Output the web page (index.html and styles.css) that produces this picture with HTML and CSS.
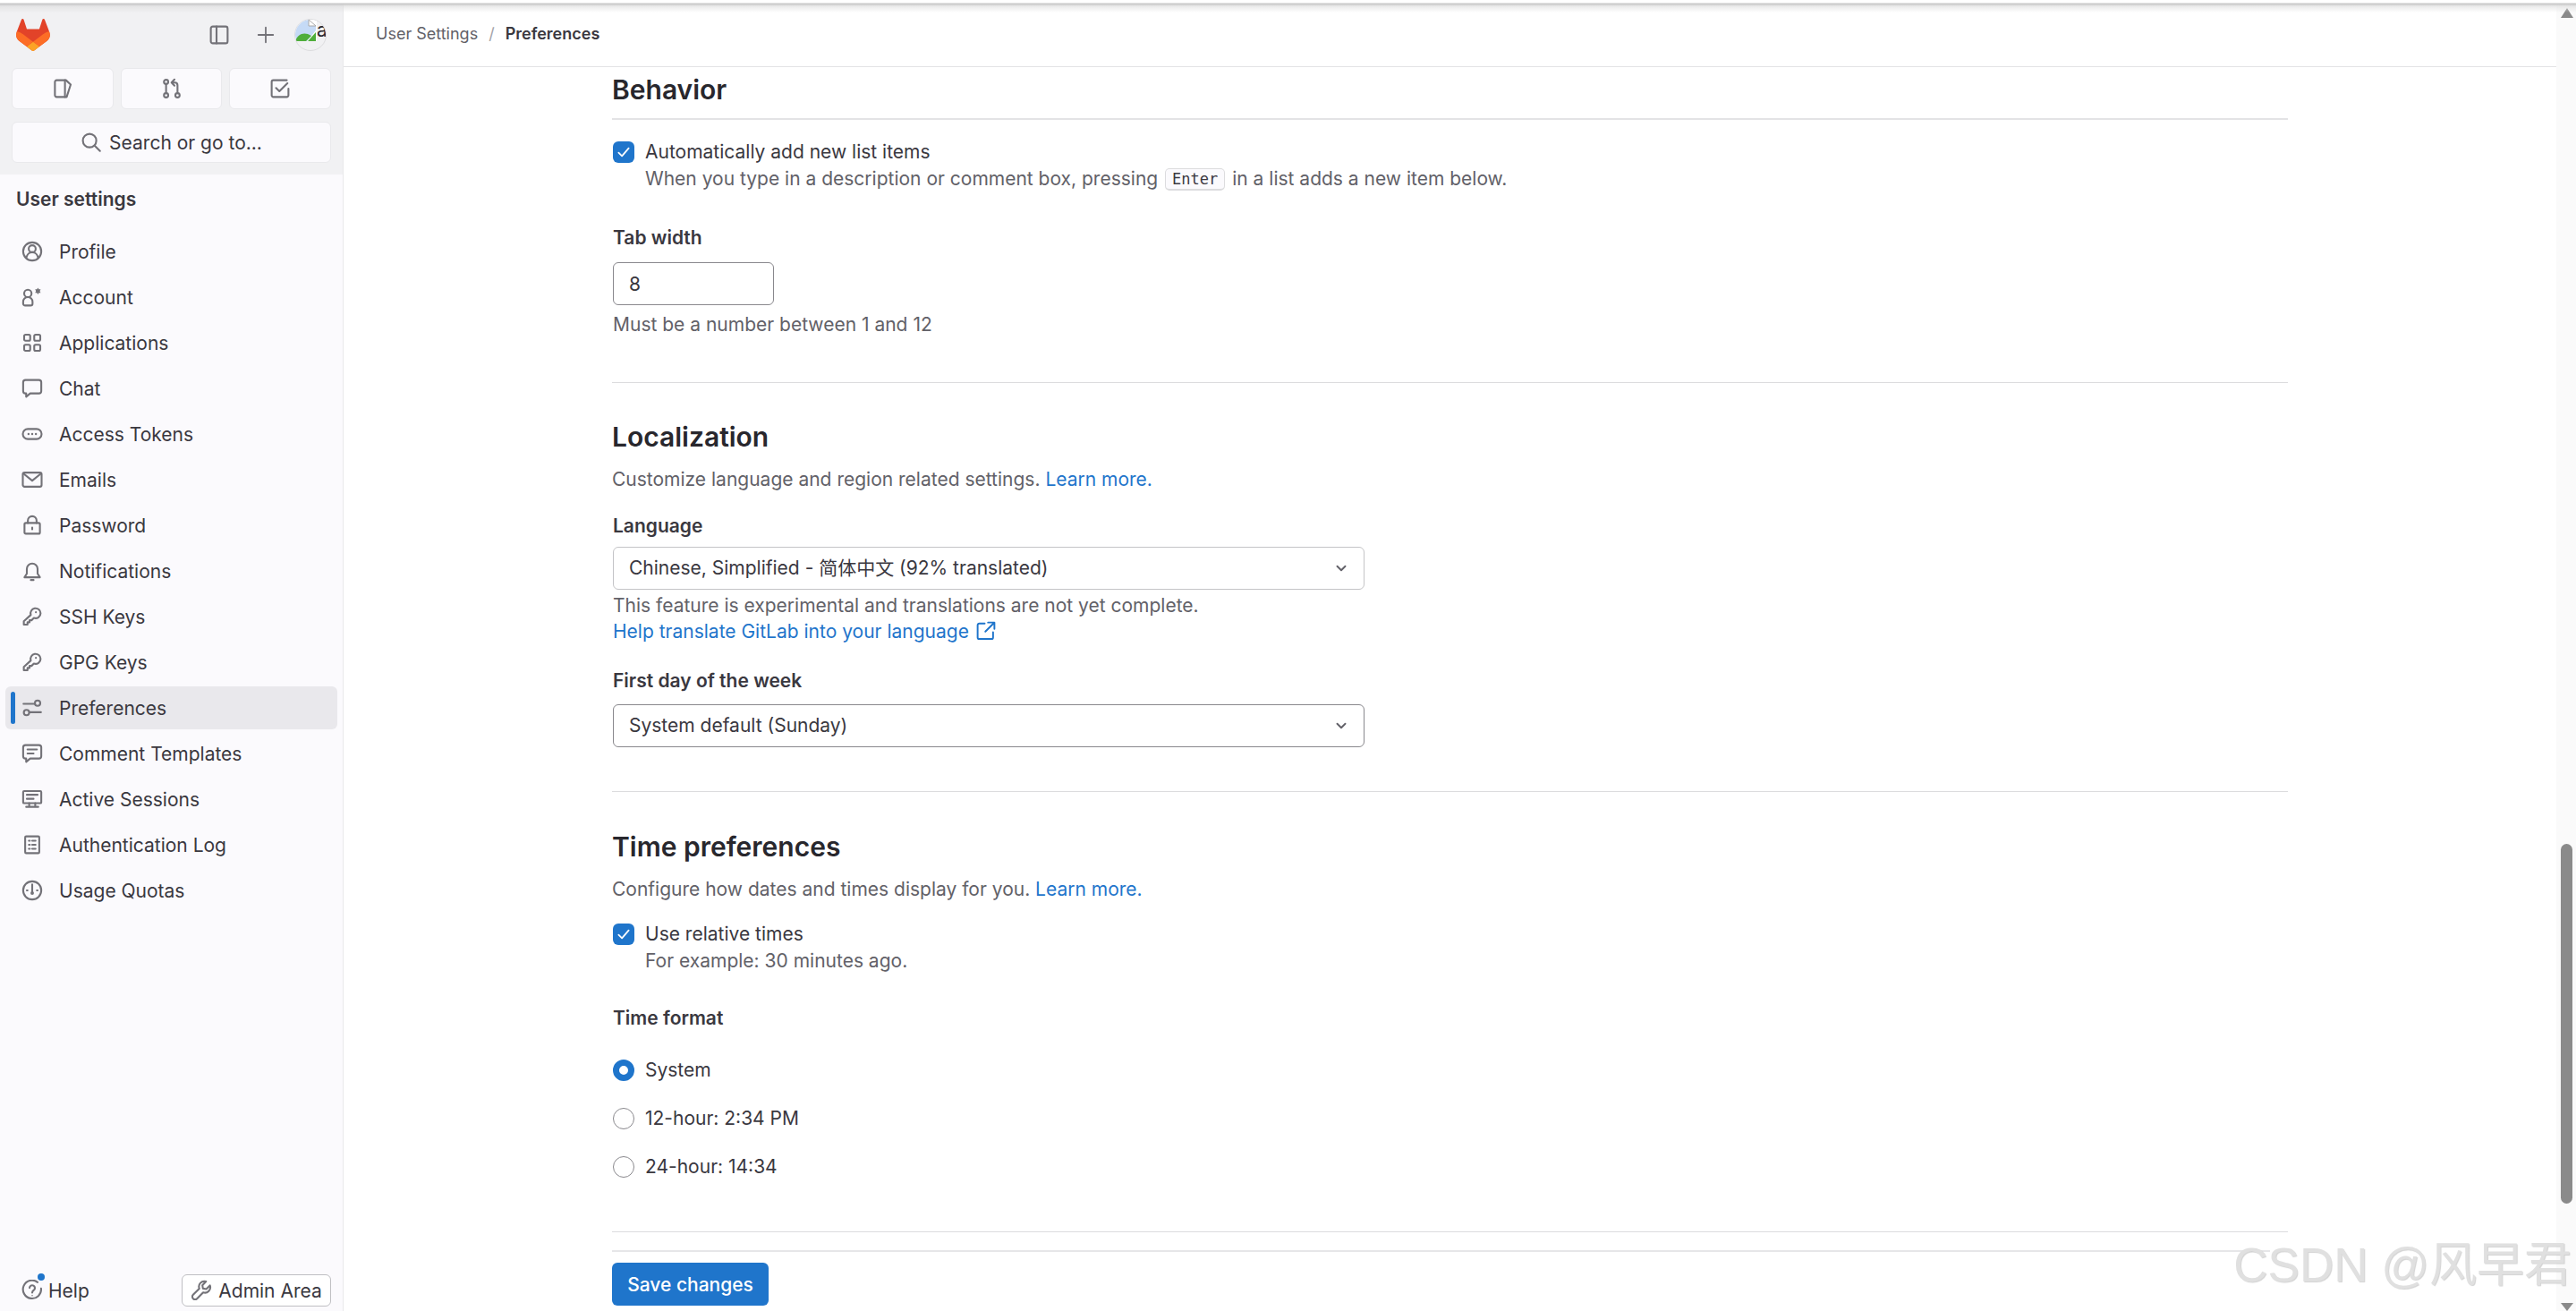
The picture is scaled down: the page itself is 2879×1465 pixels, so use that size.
FILE: index.html
```html
<!DOCTYPE html>
<html lang="en">
<head>
<meta charset="utf-8">
<title>Preferences</title>
<link rel="stylesheet" href="styles.css">
</head>
<body>
<svg class="sprite" xmlns="http://www.w3.org/2000/svg">
  <symbol id="i-panel" viewBox="0 0 16 16"><rect x="1.75" y="1.75" width="12.5" height="12.5" rx="1.5"/><path d="M6 1.75v12.5"/></symbol>
  <symbol id="i-plus" viewBox="0 0 16 16"><path d="M2.500 8h11M8 2.500v11"/></symbol>
  <symbol id="i-issues" viewBox="0 0 16 16"><path d="M3.5 1.75h7l3.5 3.25-3 9.25H3.5A1.25 1.25 0 0 1 2.25 13V3a1.25 1.25 0 0 1 1.25-1.25z"/><path d="M9.75 1.75v12.5"/></symbol>
  <symbol id="i-mr" viewBox="0 0 16 16"><circle cx="3.75" cy="3" r="1.6"/><circle cx="3.75" cy="13" r="1.6"/><circle cx="12.25" cy="13" r="1.6"/><path d="M3.75 4.6v6.8M12.25 11.4V5.5a2 2 0 0 0-2-2H8.5M10 1.2 7.8 3.5 10 5.8"/></symbol>
  <symbol id="i-todo" viewBox="0 0 16 16"><path d="M13 1.75H3A1.25 1.25 0 0 0 1.75 3v10A1.25 1.25 0 0 0 3 14.25h10A1.25 1.25 0 0 0 14.25 13V8"/><path d="m5 7.5 2.5 2.5 6-6"/></symbol>
  <symbol id="i-search" viewBox="0 0 16 16"><circle cx="6.75" cy="6.75" r="5"/><path d="m10.5 10.5 4 4"/></symbol>
  <symbol id="i-profile" viewBox="0 0 16 16"><circle cx="8" cy="8" r="6.75"/><circle cx="8" cy="6" r="2.6"/><path d="M3.6 12.8c.4-2.4 2.2-4.2 4.4-4.2s4 1.8 4.4 4.2"/></symbol>
  <symbol id="i-account" viewBox="0 0 16 16"><circle cx="4.750" cy="5.250" r="2.750"/><path d="M1.250 11.500A3.500 3.500 0 0 1 4.750 8a3.500 3.500 0 0 1 3.500 3.500v1.250a1.500 1.500 0 0 1-1.500 1.500h-4a1.500 1.500 0 0 1-1.500-1.500z"/><path class="solid" d="M12.250 1l.7 1.200 1.350-.1-.6 1.400.6 1.400-1.350-.1-.7 1.200-.7-1.200-1.350.1.600-1.400-.600-1.400 1.350.1z"/></symbol>
  <symbol id="i-apps" viewBox="0 0 16 16"><rect x="2" y="2" width="4.500" height="4.500" rx="1"/><rect x="9.500" y="2" width="4.500" height="4.500" rx="1"/><rect x="2" y="9.500" width="4.500" height="4.500" rx="1"/><rect x="9.500" y="9.500" width="4.500" height="4.500" rx="1"/></symbol>
  <symbol id="i-chat" viewBox="0 0 16 16"><path d="M3 1.750h10A1.750 1.750 0 0 1 14.750 3.500v6.500A1.750 1.750 0 0 1 13 11.750H6.500L3.500 14.250v-2.500H3A1.750 1.750 0 0 1 1.250 10V3.500A1.750 1.750 0 0 1 3 1.750z"/></symbol>
  <symbol id="i-token" viewBox="0 0 16 16"><rect x="1" y="4.250" width="14" height="7.500" rx="3.750"/><circle class="solid" cx="5.250" cy="8" r=".8"/><circle class="solid" cx="8" cy="8" r=".8"/><circle class="solid" cx="10.750" cy="8" r=".8"/></symbol>
  <symbol id="i-mail" viewBox="0 0 16 16"><rect x="1" y="2.750" width="14" height="10.500" rx="1.250"/><path d="m1.500 3.500 6.500 5.250 6.500-5.250"/></symbol>
  <symbol id="i-lock" viewBox="0 0 16 16"><rect x="2.250" y="6.250" width="11.500" height="8" rx="1"/><path d="M4.750 6.250V4.500a3.250 3.250 0 0 1 6.500 0v1.750"/><path d="M8 9.750v1.200"/></symbol>
  <symbol id="i-bell" viewBox="0 0 16 16"><path d="M4 6.500a4 4 0 0 1 8 0V10l1.750 2.750H2.250L4 10z"/><path d="M7 14.750h2"/></symbol>
  <symbol id="i-key" viewBox="0 0 16 16"><path d="M14.250 5.500a3.750 3.750 0 0 1-5 3.550L7.500 10.750H6v1.500H4.500v1.750h-2.750v-2.500L6.950 6.750A3.750 3.750 0 1 1 14.250 5.500z"/><circle class="solid" cx="10.750" cy="4.750" r=".7"/></symbol>
  <symbol id="i-prefs" viewBox="0 0 16 16"><path d="M1.500 5h8.500"/><circle cx="12" cy="4.500" r="2"/><path d="M6 11.250h8.500"/><circle cx="3.750" cy="11.500" r="2"/></symbol>
  <symbol id="i-comment" viewBox="0 0 16 16"><path d="M3 1.750h10A1.750 1.750 0 0 1 14.750 3.500v6.500A1.750 1.750 0 0 1 13 11.750H6.500L3.500 14.250v-2.500H3A1.750 1.750 0 0 1 1.250 10V3.500A1.750 1.750 0 0 1 3 1.750z"/><path d="M4.500 5h7M4.500 8h4.500"/></symbol>
  <symbol id="i-monitor" viewBox="0 0 16 16"><rect x="1.250" y="2" width="13.500" height="9" rx=".75"/><path d="M4 4.750h8M4 7.750h5M5.750 11v2.500M10.250 11v2.500M3.500 13.750h9"/></symbol>
  <symbol id="i-log" viewBox="0 0 16 16"><rect x="2.750" y="1.750" width="10.500" height="12.500" rx=".75"/><path d="M5.500 5h.75M8 5h2.500M5.500 8h.75M8 8h2.500M5.500 11h.75M8 11h2.500"/></symbol>
  <symbol id="i-quota" viewBox="0 0 16 16"><circle cx="8" cy="8" r="6.750"/><path d="M8 3.500V9M4 8h.5M11.500 8h.5"/><circle class="solid" cx="8" cy="10" r="1.300"/></symbol>
  <symbol id="i-help" viewBox="0 0 16 16"><path d="M12 1.900A6.750 6.750 0 1 0 14.600 6.500"/><path d="M6 6.100a2 2 0 1 1 3.200 1.700c-.8.600-1.200 1-1.200 1.900"/><circle class="solid" cx="8" cy="11.800" r=".5"/></symbol>
  <symbol id="i-wrench" viewBox="0 0 16 16"><path d="M14.400 4.300 11.700 7l-2.500-.4-.4-2.500 2.700-2.700a4 4 0 0 0-5 5.200L1.900 11.200a2 2 0 0 0 2.900 2.900l4.600-4.600a4 4 0 0 0 5-5.200z"/></symbol>
  <symbol id="i-chev" viewBox="0 0 16 16"><path d="m4 6 4 4 4-4"/></symbol>
  <symbol id="i-ext" viewBox="0 0 16 16"><path d="M7 2.500H3A1.250 1.250 0 0 0 1.750 3.750v9A1.250 1.250 0 0 0 3 14h9a1.250 1.250 0 0 0 1.250-1.250V9"/><path d="M9.500 1.750h4.750V6.500M14 2 7.500 8.500"/></symbol>
  <symbol id="i-check" viewBox="0 0 16 16"><path d="m3.500 8.500 3 3 6-7"/></symbol>
</svg>

<div class="app">
  <aside class="sidebar">
    <div class="side-top">
      <div class="brand-row">
        <svg class="tanuki" viewBox="0 0 25 24" aria-label="GitLab">
          <path d="m24.507 9.5-.034-.09L21.082.562a.896.896 0 0 0-1.694.091l-2.29 7.01H7.825L5.535.653a.898.898 0 0 0-1.694-.09L.451 9.411.416 9.5a6.297 6.297 0 0 0 2.09 7.278l.012.01.03.022 5.16 3.867 2.56 1.935 1.554 1.176a1.051 1.051 0 0 0 1.268 0l1.555-1.176 2.56-1.935 5.197-3.89.014-.01A6.297 6.297 0 0 0 24.507 9.5Z" fill="#E24329"/>
          <path d="m24.507 9.5-.034-.09a11.44 11.44 0 0 0-4.56 2.051l-7.447 5.632 4.742 3.584 5.197-3.89.014-.01A6.297 6.297 0 0 0 24.507 9.5Z" fill="#FC6D26"/>
          <path d="m7.707 20.677 2.56 1.935 1.555 1.176a1.051 1.051 0 0 0 1.268 0l1.555-1.176 2.56-1.935-4.743-3.584-4.755 3.584Z" fill="#FCA326"/>
          <path d="M5.01 11.461a11.43 11.43 0 0 0-4.56-2.05L.416 9.5a6.297 6.297 0 0 0 2.09 7.278l.012.01.03.022 5.16 3.867 4.745-3.584-7.444-5.632Z" fill="#FC6D26"/>
        </svg>
        <div class="brand-actions">
          <svg class="ic"><use href="#i-panel"/></svg>
          <svg class="ic"><use href="#i-plus"/></svg>
          <span class="avatar">
            <svg class="broken" viewBox="0 0 24 24">
              <path d="M0 0h24v24H0z" fill="#fff"/>
              <path d="M0 0h15v7h8v5L13 24H0z" fill="#c5daf6"/>
              <path d="M15 0v7h8z" fill="#fff" stroke="#a8a8a8"/>
              <path d="M0 24c2-7 8-10 14-8l4 2-6 6z" fill="#4fae3b"/>
              <path d="m23 14-9 10h9z" fill="#4fae3b"/>
            </svg><span class="avatar-alt">a</span>
          </span>
        </div>
      </div>
      <div class="counts">
        <button class="count-btn"><svg class="ic"><use href="#i-issues"/></svg></button>
        <button class="count-btn"><svg class="ic"><use href="#i-mr"/></svg></button>
        <button class="count-btn"><svg class="ic"><use href="#i-todo"/></svg></button>
      </div>
      <button class="search-btn"><svg class="ic"><use href="#i-search"/></svg><span>Search or go to...</span></button>
    </div>

    <div class="side-title">User settings</div>
    <nav class="nav">
      <a class="nav-item"><svg class="ic"><use href="#i-profile"/></svg>Profile</a>
      <a class="nav-item"><svg class="ic"><use href="#i-account"/></svg>Account</a>
      <a class="nav-item"><svg class="ic"><use href="#i-apps"/></svg>Applications</a>
      <a class="nav-item"><svg class="ic"><use href="#i-chat"/></svg>Chat</a>
      <a class="nav-item"><svg class="ic"><use href="#i-token"/></svg>Access Tokens</a>
      <a class="nav-item"><svg class="ic"><use href="#i-mail"/></svg>Emails</a>
      <a class="nav-item"><svg class="ic"><use href="#i-lock"/></svg>Password</a>
      <a class="nav-item"><svg class="ic"><use href="#i-bell"/></svg>Notifications</a>
      <a class="nav-item"><svg class="ic"><use href="#i-key"/></svg>SSH Keys</a>
      <a class="nav-item"><svg class="ic"><use href="#i-key"/></svg>GPG Keys</a>
      <a class="nav-item active"><svg class="ic"><use href="#i-prefs"/></svg>Preferences</a>
      <a class="nav-item"><svg class="ic"><use href="#i-comment"/></svg>Comment Templates</a>
      <a class="nav-item"><svg class="ic"><use href="#i-monitor"/></svg>Active Sessions</a>
      <a class="nav-item"><svg class="ic"><use href="#i-log"/></svg>Authentication Log</a>
      <a class="nav-item"><svg class="ic"><use href="#i-quota"/></svg>Usage Quotas</a>
    </nav>

    <div class="side-foot">
      <a class="help"><span class="help-ic"><svg class="ic"><use href="#i-help"/></svg><i class="dot"></i></span>Help</a>
      <a class="admin"><svg class="ic"><use href="#i-wrench"/></svg>Admin Area</a>
    </div>
  </aside>

  <main class="main">
    <header class="crumbs">
      <span>User Settings</span><span class="crumb-sep">/</span><b>Preferences</b>
    </header>

    <form class="content">
      <h2 class="h first">Behavior</h2>
      <div class="rule-sm"></div>
      <div class="check-row mt-behavior">
        <span class="box"><svg class="ic-check"><use href="#i-check"/></svg></span>
        <div>
          <div class="line">Automatically add new list items</div>
          <div class="line muted">When you type in a description or comment box, pressing <kbd>Enter</kbd> in a list adds a new item below.</div>
        </div>
      </div>
      <label class="lbl mt-tab">Tab width</label>
      <div class="input">8</div>
      <div class="line muted mt-hint">Must be a number between 1 and 12</div>
      <hr class="sep mt-sep1">

      <h2 class="h mt-loc">Localization</h2>
      <p class="line muted mt-desc">Customize language and region related settings. <a class="link">Learn more.</a></p>
      <label class="lbl mt-lang">Language</label>
      <div class="select soft"><span>Chinese, Simplified - 简体中文 (92% translated)</span><svg class="ic-chev"><use href="#i-chev"/></svg></div>
      <div class="note muted mt-note">This feature is experimental and translations are not yet complete.</div>
      <div class="note note-link"><a class="link">Help translate GitLab into your language <svg class="ic-ext"><use href="#i-ext"/></svg></a></div>
      <label class="lbl mt-first">First day of the week</label>
      <div class="select"><span>System default (Sunday)</span><svg class="ic-chev"><use href="#i-chev"/></svg></div>
      <hr class="sep mt-sep2">

      <h2 class="h mt-time">Time preferences</h2>
      <p class="line muted mt-desc">Configure how dates and times display for you. <a class="link">Learn more.</a></p>
      <div class="check-row mt-rel">
        <span class="box"><svg class="ic-check"><use href="#i-check"/></svg></span>
        <div>
          <div class="line">Use relative times</div>
          <div class="line muted">For example: 30 minutes ago.</div>
        </div>
      </div>
      <label class="lbl mt-format">Time format</label>
      <div class="radios">
        <div class="radio-row"><span class="radio on"></span>System</div>
        <div class="radio-row"><span class="radio"></span>12-hour: 2:34 PM</div>
        <div class="radio-row"><span class="radio"></span>24-hour: 14:34</div>
      </div>
      <hr class="sep mt-sep3">
      <hr class="sep foot-line">
      <button class="save" type="button">Save changes</button>
    </form>
  </main>

  <div class="scrollbar">
    <span class="arrow up"></span>
    <div class="track"><div class="thumb"></div></div>
    <span class="arrow down"></span>
  </div>
</div>

<div class="top-shadow"></div>
<div class="watermark">CSDN @风早君</div>
</body>
</html>
```

FILE: styles.css
```css
* { box-sizing: border-box; }
html, body { margin: 0; height: 100%; overflow: hidden; }
body {
  font-family: Inter, "Noto Sans CJK SC", "Liberation Sans", sans-serif;
  font-size: 21px;
  color: #3a383f;
  background: #fff;
}
.sprite { display: none; }
.ic {
  width: 24px; height: 24px; flex: none;
  fill: none; stroke: #737278; stroke-width: 1.4; stroke-linecap: round; stroke-linejoin: round;
}
.solid { fill: #737278; stroke: none; }

.app { display: flex; height: 1465px; }

/* Sidebar */
.sidebar {
  width: 384px; flex: none; height: 100%;
  display: flex; flex-direction: column;
  background: #fbfafd;
  border-right: 1px solid #e9e9eb;
}
.side-top { height: 195px; background: #f1f1f3; padding: 21px 13px 0; }
.brand-row { display: flex; justify-content: space-between; height: 36px; padding-left: 5px; padding-right: 5px; }
.tanuki { width: 38px; height: 36px; }
.brand-actions { display: flex; align-items: center; gap: 28px; }
.brand-actions .ic:nth-child(2) { stroke-width: 1.2; }
.avatar {
  width: 36px; height: 36px; border-radius: 50%;
  border: 1px solid #dcdcde; overflow: hidden;
  display: flex; align-items: flex-start;
  margin-left: -8px;
}
.broken { width: 24px; height: 24px; flex: none; }
.avatar-alt { font-size: 21px; line-height: 24px; color: #28272d; }
.counts { display: flex; gap: 8px; margin-top: 19px; }
.count-btn, .search-btn {
  height: 46px; border: 1px solid #e9e9ec; border-radius: 6px;
  background: #fbfafd; padding: 0;
  display: flex; align-items: center; justify-content: center;
  font: inherit; color: #3a383f;
}
.count-btn { flex: 1; }
.search-btn { width: 100%; margin-top: 14px; gap: 8px; }

.side-title { margin: 13px 0 0 18px; line-height: 30px; font-weight: 600; color: #3a383f; }
.nav { display: flex; flex-direction: column; gap: 3px; margin: 19px 6px 0; }
.nav-item {
  position: relative;
  height: 48px; display: flex; align-items: center; gap: 18px;
  padding-left: 18px; border-radius: 6px; color: #3a383f;
}
.nav-item.active { background: #e9e8ec; }
.nav-item.active::before {
  content: ""; position: absolute; left: 6px; top: 6px; bottom: 6px; width: 5px;
  border-radius: 3px; background: #1f75cb;
}
.side-foot {
  margin-top: auto; padding: 0 13px 5px 24px;
  display: flex; align-items: center; justify-content: space-between;
}
.help { display: flex; align-items: center; gap: 6px; }
.help-ic { position: relative; display: flex; }
.dot {
  position: absolute; right: -2px; top: -7px;
  width: 8px; height: 8px; border-radius: 50%; background: #1f75cb;
}
.admin {
  height: 36px; width: 167px;
  display: flex; align-items: center; justify-content: center; gap: 7px;
  border: 1px solid #bfbfc3; border-radius: 6px; background: #fff;
}

/* Main */
.main { flex: 1; min-width: 0; }
.crumbs {
  height: 75px; padding: 1px 0 0 36px;
  display: flex; align-items: center;
  font-size: 18px; color: #626168;
  border-bottom: 1px solid #e3e3e5;
}
.crumbs b { font-weight: 600; color: #3a383f; }
.crumb-sep { margin: 0 12px; color: #a4a3a8; }
.content { margin-left: 300px; width: 1873px; }

.h { margin: 0; font-size: 30px; line-height: 36px; font-weight: 600; color: #28272d; }
.h.first { margin-top: 7px; }
.rule-sm { margin-top: 14px; height: 2px; background: #e3e3e5; }
.line { line-height: 30px; margin: 0; }
.muted { color: #626168; }
.link { color: #1f75cb; }
.check-row { display: flex; gap: 12px; margin-left: 1px; }
.box {
  width: 24px; height: 24px; border-radius: 6px; background: #1f75cb; flex: none; margin-top: 3px;
  display: flex; align-items: center; justify-content: center;
}
.ic-check { width: 20px; height: 20px; fill: none; stroke: #fff; stroke-width: 1.4; stroke-linecap: round; stroke-linejoin: round; }
kbd {
  font-family: "DejaVu Sans Mono", "Liberation Mono", monospace; font-size: 17px; color: #3a383f;
  display: inline-block; line-height: 20px; padding: 1px 7px;
  margin: 0 2px; vertical-align: 1px;
  background: #fbfafd; border: 1px solid #dcdcde; border-bottom-width: 2px; border-radius: 5px;
}
.lbl { display: block; line-height: 30px; font-weight: 600; color: #3a383f; margin-left: 1px; }
.input {
  width: 180px; height: 48px; margin: 12px 0 0 1px; padding-left: 17px;
  display: flex; align-items: center;
  border: 1px solid #89888d; border-radius: 6px;
}
.select {
  width: 840px; height: 48px; margin: 11px 0 0 1px; padding: 0 16px 0 17px;
  display: flex; align-items: center; justify-content: space-between;
  line-height: 30px;
  border: 1px solid #89888d; border-radius: 6px;
}
.select.soft { border-color: #c4c4c7; margin-top: 8px; }
.ic-chev { width: 18px; height: 18px; fill: none; stroke: #626168; stroke-width: 1.7; stroke-linecap: round; stroke-linejoin: round; }
.note { line-height: 28px; margin-left: 1px; }
.note-link { margin-top: 1px; }
.ic-ext { width: 24px; height: 24px; vertical-align: -4px; fill: none; stroke: #1f75cb; stroke-width: 1.3; stroke-linecap: round; stroke-linejoin: round; margin-left: 1px; }
.sep { border: 0; height: 1px; margin: 0; background: #dcdcde; }
.muted.line { margin-left: 0; }
p.line { margin-left: 1px; }
.mt-hint { margin: 7px 0 0 1px !important; }
.mt-behavior { margin-top: 21px; }
.mt-tab { margin-top: 36px; }
.mt-sep1 { margin-top: 49px; }
.mt-loc { margin-top: 42px; }
p.mt-desc { margin-top: 15px; }
.mt-lang { margin-top: 22px; }
.mt-note { margin-top: 4px; }
.mt-first { margin-top: 26px; }
.mt-sep2 { margin-top: 49px; }
.mt-time { margin-top: 43px; }
.mt-rel { margin-top: 20px; }
.mt-format { margin-top: 34px; }
.radios { display: flex; flex-direction: column; gap: 24px; margin: 28px 0 0 1px; }
.radio-row { display: flex; align-items: center; gap: 12px; line-height: 30px; }
.radio { width: 24px; height: 24px; border-radius: 50%; border: 1px solid #89888d; background: #fff; flex: none; }
.radio.on { border: 7.5px solid #1f75cb; }
.mt-sep3 { margin-top: 57px; }
.foot-line { margin-top: 20px; height: 2px; background: #e6e6e8; width: 1853px; }
.save {
  display: block; width: 175px; height: 48px; margin-top: 12px;
  border: 0; border-radius: 6px; background: #1f75cb; color: #fff;
  font: inherit; font-weight: 500;
}

/* Scrollbar */
.scrollbar { width: 22px; flex: none; display: flex; flex-direction: column; align-items: center; background: #fafafa; padding: 0 3px 0 5px; position: relative; }
.track { flex: 1; width: 100%; display: flex; flex-direction: column; justify-content: flex-end; padding-bottom: 111px; }
.thumb { width: 13px; height: 402px; border-radius: 7px; background: #8a8a8a; }
.arrow { width: 0; height: 0; border-left: 7px solid transparent; border-right: 7px solid transparent; flex: none; }
.arrow.up { border-bottom: 11px solid #8a8a8a; margin-top: 9px; }
.arrow.down { border-top: 9px solid #8a8a8a; }

/* Overlays */
.top-shadow {
  position: fixed; left: 0; right: 0; top: 0; height: 14px; pointer-events: none;
  background: linear-gradient(to bottom, #fff 0, #fff 3px, #c4c4c4 4px, rgba(220,220,220,.6) 7px, rgba(255,255,255,0) 14px);
}
.watermark {
  position: fixed; right: 5px; bottom: 21px;
  font-family: "Liberation Sans", "Noto Sans CJK SC", sans-serif;
  font-size: 53px; line-height: 60px; color: #e0e0e0; white-space: nowrap;
  text-shadow: 1px 1px 1px rgba(0,0,0,.18);
}
```
